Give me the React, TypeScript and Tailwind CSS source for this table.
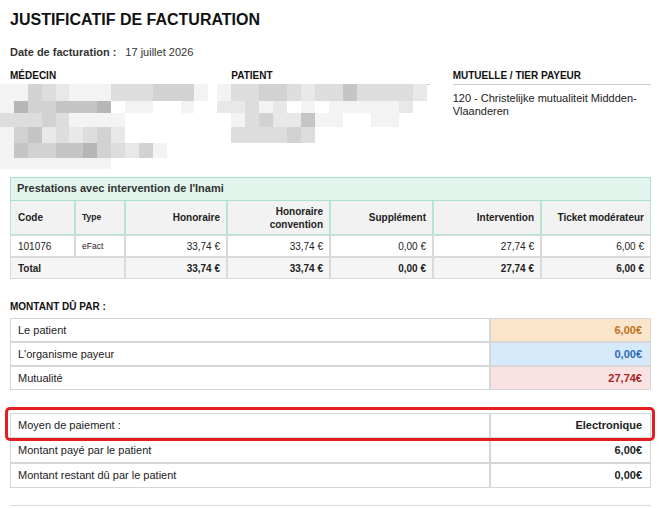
import React from "react";

const shade: Record<string, string> = {
  "0": "bg-transparent",
  "1": "bg-[#f3f3f3]",
  "2": "bg-[#e8e8e8]",
  "3": "bg-[#dddddd]",
  "4": "bg-[#d2d2d2]",
  "5": "bg-[#c5c5c5]",
  "6": "bg-[#b6b6b6]",
};

const rowHeights = ["h-[17px]", "h-[12px]", "h-[14px]", "h-[16px]", "h-[15px]", "h-[11px]"];

// blocs floutés (données masquées)
const medecinBlur = [
  "114321113334441",
  "164455560110010",
  "333431111000000",
  "145232342000000",
  "154455643241000",
  "111111110000000",
];

const patientBlur = [
  "133443233533332",
  "223120101111120",
  "013422511001100",
  "033334300000000",
];

function Pixelated({ rows, className }: { rows: string[]; className: string }) {
  return (
    <div className={className}>
      {rows.map((row, i) => (
        <div key={i} className={`flex ${rowHeights[i]}`}>
          {row.split("").map((c, j) => (
            <div key={j} className={`w-[14px] h-full ${shade[c]}`} />
          ))}
        </div>
      ))}
    </div>
  );
}

const prestations = [
  { code: "101076", type: "eFact", honoraire: "33,74 €", convention: "33,74 €", supplement: "0,00 €", intervention: "27,74 €", ticket: "6,00 €" },
];

const thBase = "border-r border-b border-l border-[#b6e5d3] bg-[#f2f2f2] font-bold align-middle leading-[13px]";
const tdBase = "border border-[#d9d9d9] align-middle";

export default function App() {
  return (
    <div className="min-h-[508px] bg-white px-[10px] pt-[10px] font-['Liberation_Sans',Arial,sans-serif] text-[#222]">
      {/* Titre */}
      <h1 className="text-[16px] leading-[19px] font-bold text-[#111]">JUSTIFICATIF DE FACTURATION</h1>

      <div className="mt-[16px] flex text-[11px] leading-[14px] text-[#333]">
        <span className="font-bold">Date de facturation :</span>
        <span className="ml-[9px]">17 juillet 2026</span>
      </div>

      {/* Médecin / patient / mutuelle */}
      <div className="mt-[11px] grid grid-cols-3 gap-x-[23px]">
        <div>
          <div className="border-b border-[#cccccc] pb-[2px] text-[10px] leading-[12px] font-bold text-[#111]">MÉDECIN</div>
          <Pixelated rows={medecinBlur} className="-ml-[10px] -mt-[1px]" />
        </div>
        <div>
          <div className="border-b border-[#cccccc] pb-[2px] text-[10px] leading-[12px] font-bold text-[#111]">PATIENT</div>
          <Pixelated rows={patientBlur} className="-ml-[14px] -mt-[1px]" />
        </div>
        <div>
          <div className="border-b border-[#cccccc] pb-[2px] text-[10px] leading-[12px] font-bold text-[#111]">MUTUELLE / TIER PAYEUR</div>
          <p className="mt-[7px] text-[11px] leading-[13px]">120 - Christelijke mutualiteit Middden-Vlaanderen</p>
        </div>
      </div>

      {/* Prestations */}
      <div className="mt-[8px]">
        <div className="border border-[#a8e0cb] bg-[#e1f5ed] px-[6px] pt-[4px] pb-[5px] text-[11px] leading-[13px] font-bold text-[#333]">
          Prestations avec intervention de l'Inami
        </div>
        <table className="w-full table-fixed border-separate border-spacing-0 text-[10px] text-[#222]">
          <colgroup>
            <col className="w-[65px]" />
            <col className="w-[50px]" />
            <col className="w-[102px]" />
            <col className="w-[103px]" />
            <col className="w-[103px]" />
            <col className="w-[108px]" />
            <col className="w-[110px]" />
          </colgroup>
          <thead>
            <tr>
              <th className={`${thBase} h-[34px] pl-[7px] text-left`}>Code</th>
              <th className={`${thBase} pl-[6px] text-left text-[8.5px]`}>Type</th>
              <th className={`${thBase} pr-[6px] text-right`}>Honoraire</th>
              <th className={`${thBase} pr-[6px] text-right`}>
                Honoraire
                <br />
                convention
              </th>
              <th className={`${thBase} pr-[6px] text-right`}>Supplément</th>
              <th className={`${thBase} pr-[6px] text-right`}>Intervention</th>
              <th className={`${thBase} pr-[6px] text-right`}>Ticket modérateur</th>
            </tr>
          </thead>
          <tbody>
            {prestations.map((p) => (
              <tr key={p.code}>
                <td className={`${tdBase} h-[22px] pl-[7px]`}>{p.code}</td>
                <td className={`${tdBase} pl-[6px] text-[8.5px]`}>{p.type}</td>
                <td className={`${tdBase} pr-[6px] text-right`}>{p.honoraire}</td>
                <td className={`${tdBase} pr-[6px] text-right`}>{p.convention}</td>
                <td className={`${tdBase} pr-[6px] text-right`}>{p.supplement}</td>
                <td className={`${tdBase} pr-[6px] text-right`}>{p.intervention}</td>
                <td className={`${tdBase} pr-[6px] text-right`}>{p.ticket}</td>
              </tr>
            ))}
            <tr className="bg-[#f5f5f5] font-bold">
              <td colSpan={2} className={`${tdBase} h-[22px] pl-[7px]`}>Total</td>
              <td className={`${tdBase} pr-[6px] text-right`}>33,74 €</td>
              <td className={`${tdBase} pr-[6px] text-right`}>33,74 €</td>
              <td className={`${tdBase} pr-[6px] text-right`}>0,00 €</td>
              <td className={`${tdBase} pr-[6px] text-right`}>27,74 €</td>
              <td className={`${tdBase} pr-[6px] text-right`}>6,00 €</td>
            </tr>
          </tbody>
        </table>
      </div>

      {/* Montant dû */}
      <div className="mt-[22px] text-[10px] leading-[12px] font-bold text-[#111]">MONTANT DÛ PAR :</div>
      <table className="mt-[5px] w-full table-fixed border-separate border-spacing-0 text-[11px]">
        <colgroup>
          <col />
          <col className="w-[161px]" />
        </colgroup>
        <tbody>
          <tr>
            <td className="h-[24px] border border-[#d6d6d6] pl-[7px]">Le patient</td>
            <td className="border border-[#d6d6d6] bg-[#fbe4cc] pr-[8px] text-right font-bold text-[#c2721a]">6,00€</td>
          </tr>
          <tr>
            <td className="h-[24px] border border-[#d6d6d6] pl-[7px]">L'organisme payeur</td>
            <td className="border border-[#d6d6d6] bg-[#d6e9fb] pr-[8px] text-right font-bold text-[#2d6cb4]">0,00€</td>
          </tr>
          <tr>
            <td className="h-[24px] border border-[#d6d6d6] pl-[7px]">Mutualité</td>
            <td className="border border-[#d6d6d6] bg-[#fbe2e2] pr-[8px] text-right font-bold text-[#a82424]">27,74€</td>
          </tr>
        </tbody>
      </table>

      {/* Paiement */}
      <div className="relative mt-[23px]">
        <table className="w-full table-fixed border-separate border-spacing-0 text-[11px]">
          <colgroup>
            <col />
            <col className="w-[161px]" />
          </colgroup>
          <tbody>
            <tr>
              <td className="h-[25px] border border-[#d6d6d6] pl-[7px]">Moyen de paiement :</td>
              <td className="border border-[#d6d6d6] pr-[8px] text-right font-bold">Electronique</td>
            </tr>
            <tr>
              <td className="h-[25px] border border-[#d6d6d6] pl-[7px]">Montant payé par le patient</td>
              <td className="border border-[#d6d6d6] pr-[8px] text-right font-bold">6,00€</td>
            </tr>
            <tr>
              <td className="h-[25px] border border-[#d6d6d6] pl-[7px]">Montant restant dû par le patient</td>
              <td className="border border-[#d6d6d6] pr-[8px] text-right font-bold">0,00€</td>
            </tr>
          </tbody>
        </table>
        {/* surlignage rouge */}
        <div className="pointer-events-none absolute -top-[6px] -left-[5px] -right-[4px] h-[34px] rounded-[5px] border-[3px] border-[#e41e1e]" />
      </div>

      <div className="mt-[17px] border-t border-[#dddddd]" />
    </div>
  );
}
